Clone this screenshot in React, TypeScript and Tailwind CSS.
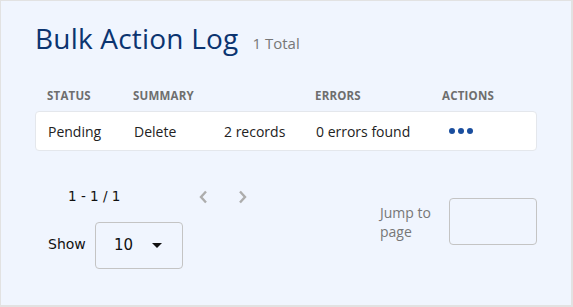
import React from "react";

const cols = "grid grid-cols-[86px_90px_92px_127px_1fr] px-3";

const App = () => {
  return (
    <div
      className="w-[573px] h-[307px] bg-[#f0f5fe] border border-[#e2e2e2] border-r-2 border-b-2 box-border"
      style={{ fontFamily: "'Open Sans', Lato, sans-serif" }}
    >
      <div className="pt-[19px] px-[34px]">
        <div className="flex items-baseline">
          <h1 className="text-[28px] text-[#0b3470] leading-[36px] tracking-[0.2px]">Bulk Action Log</h1>
          <span className="ml-[14px] text-[15px] text-[#777]">1 Total</span>
        </div>

        <div className={`${cols} mt-[32px] text-[11.5px] font-bold tracking-[0.2px] text-[#6e6e6e] leading-[16px]`}>
          <div>STATUS</div>
          <div>SUMMARY</div>
          <div></div>
          <div>ERRORS</div>
          <div>ACTIONS</div>
        </div>

        <div
          className={`${cols} mt-[7px] h-[40px] items-center bg-white border border-[#e4e7ec] rounded-[4px] text-[14px] text-[#222]`}
        >
          <div>Pending</div>
          <div>Delete</div>
          <div>2 records</div>
          <div>0 errors found</div>
          <div className="flex gap-[3px] pl-[6px]">
            <span className="w-[6px] h-[6px] rounded-full bg-[#1a4e9e]" />
            <span className="w-[6px] h-[6px] rounded-full bg-[#1a4e9e]" />
            <span className="w-[6px] h-[6px] rounded-full bg-[#1a4e9e]" />
          </div>
        </div>

        <div className="flex justify-between mt-[33px]">
          <div
            className="pl-[13px] text-[#111]"
            style={{ fontFamily: "'DejaVu Sans', Verdana, sans-serif" }}
          >
            <div className="flex items-center h-[24px]">
              <span className="ml-[20px] w-[130px] text-[13.5px]">1 - 1 / 1</span>
              <svg width="10" height="16" viewBox="0 0 10 16" className="mt-[2px]">
                <path d="M8 2.5 L3 8 L8 13.5" fill="none" stroke="#adadad" strokeWidth="2.4" />
              </svg>
              <svg width="10" height="16" viewBox="0 0 10 16" className="ml-[30px] mt-[2px]">
                <path d="M2 2.5 L7 8 L2 13.5" fill="none" stroke="#adadad" strokeWidth="2.4" />
              </svg>
            </div>
            <div className="flex items-center mt-[14px]">
              <span className="text-[14px] w-[47px] -mt-[3px]">Show</span>
              <div className="flex items-center justify-between w-[88px] h-[47px] border border-[#c4c4c4] rounded-[4px] pl-[18px] pr-[20px]">
                <span className="text-[15px]">10</span>
                <svg width="10" height="6" viewBox="0 0 10 6">
                  <path d="M0 0 H10 L5 5 Z" fill="#111" />
                </svg>
              </div>
            </div>
          </div>

          <div className="flex items-start pt-[14px]">
            <div className="w-[69px] mt-[5px] text-[14px] leading-[19px] text-[#777]">
              Jump to
              <br />
              page
            </div>
            <div className="w-[88px] h-[47px] border border-[#c4c4c4] rounded-[4px] bg-[#f0f5fe]" />
          </div>
        </div>
      </div>
    </div>
  );
};

export default App;
